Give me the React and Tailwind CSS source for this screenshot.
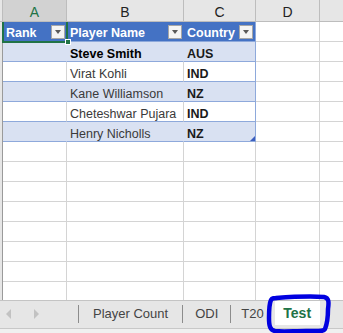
import React from "react";

const colWidths = ["w-[64px]", "w-[117px]", "w-[72px]", "w-[64px]"];
const colNames = ["A", "B", "C", "D"];

const players = [
  { name: "Steve Smith", country: "AUS", strong: true },
  { name: "Virat Kohli", country: "IND" },
  { name: "Kane Williamson", country: "NZ" },
  { name: "Cheteshwar Pujara", country: "IND" },
  { name: "Henry Nicholls", country: "NZ" },
];

function FilterButton() {
  return (
    <div className="w-[14px] h-[14px] shrink-0 bg-[#f4f4f4] border border-[#a6a6a6] flex items-center justify-center">
      <div className="w-0 h-0 border-l-[3.5px] border-r-[3.5px] border-t-[4px] border-l-transparent border-r-transparent border-t-[#595959]" />
    </div>
  );
}

function ColumnHeader() {
  return (
    <div className="flex h-[22px] shrink-0 bg-[#e6e6e6] border-b border-[#bdbdbd]">
      <div className="w-[3px] border-r border-[#bdbdbd]" />
      {colNames.map((c, i) => (
        <div
          key={c}
          className={
            colWidths[i] +
            " flex items-center justify-center pt-[3px] border-r border-[#bdbdbd] text-[14px] " +
            (i === 0 ? "bg-[#d2d2d2] text-[#217346]" : "text-[#222]")
          }
        >
          {c}
        </div>
      ))}
      <div className="flex-1" />
    </div>
  );
}

function TableHeaderRow() {
  return (
    <div className="flex h-[20px] shrink-0">
      <div className="w-[3px] bg-[#e6e6e6] border-r border-[#9a9a9a]" />
      <div className="w-[64px] relative bg-[#4472c4] border-b border-[#8ea9db] flex items-center justify-between pl-[3px] pr-[2px] text-white font-bold">
        <span className="mt-[3px]">Rank</span>
        <FilterButton />
        <div className="absolute -left-[1px] -top-[2px] w-[66px] h-[23px] border-2 border-[#217346]" />
        <div className="absolute -right-[4px] -bottom-[4px] w-[6px] h-[6px] bg-[#217346] border border-white" />
      </div>
      <div className="w-[117px] bg-[#4472c4] border-b border-[#8ea9db] flex items-center justify-between pl-[3px] pr-[2px] text-white font-bold">
        <span className="mt-[3px]">Player Name</span>
        <FilterButton />
      </div>
      <div className="w-[72px] bg-[#4472c4] border-b border-r border-[#8ea9db] flex items-center justify-between pl-[3px] pr-[2px] text-white font-bold">
        <span className="mt-[3px]">Country</span>
        <FilterButton />
      </div>
      <div className="w-[64px] border-r border-b border-[#d4d4d4]" />
      <div className="flex-1 border-b border-[#d4d4d4]" />
    </div>
  );
}

function DataRow({ player, band, last }) {
  const bg = band ? "bg-[#d9e1f2]" : "bg-white";
  const divider = band ? "border-r-[#d9e1f2]" : "border-r-[#d4d4d4]";
  return (
    <div className="flex h-[20px] shrink-0">
      <div className="w-[3px] bg-[#e6e6e6] border-r border-[#9a9a9a]" />
      <div className={"w-[64px] border-r border-b border-b-[#8ea9db] " + divider + " " + bg} />
      <div className={"w-[117px] border-r border-b border-b-[#8ea9db] " + divider + " " + bg + " flex items-center pl-[3px]"}>
        <span className={"mt-[5px] " + (player.strong ? "font-bold text-black" : "text-[#3a3a3a]")}>{player.name}</span>
      </div>
      <div className={"w-[72px] relative border-r border-b border-[#8ea9db] flex items-center pl-[3px] " + bg}>
        <span className="mt-[5px] font-bold text-[#1a1a1a]">{player.country}</span>
        {last && (
          <div className="absolute right-0 bottom-0 w-[5px] h-[5px] bg-[#3c5fbf] [clip-path:polygon(100%_0,100%_100%,0_100%)]" />
        )}
      </div>
      <div className="w-[64px] border-r border-b border-[#d4d4d4]" />
      <div className="flex-1 border-b border-[#d4d4d4]" />
    </div>
  );
}

function EmptyRow() {
  return (
    <div className="flex h-[20px] shrink-0">
      <div className="w-[3px] bg-[#e6e6e6] border-r border-[#9a9a9a]" />
      {colWidths.map((w) => (
        <div key={w} className={w + " border-r border-b border-[#d4d4d4]"} />
      ))}
      <div className="flex-1 border-b border-[#d4d4d4]" />
    </div>
  );
}

function SheetTabs() {
  return (
    <div className="relative h-[33px] shrink-0 bg-[#e6e6e6] border-t border-[#c4c4c4] flex items-start text-[13px] text-[#444]">
      <div className="flex items-center h-[25px] pl-[6px]">
        <div className="w-0 h-0 border-t-[5px] border-b-[5px] border-r-[5px] border-t-transparent border-b-transparent border-r-[#c2c2c2]" />
        <div className="ml-[23px] w-0 h-0 border-t-[5px] border-b-[5px] border-l-[5px] border-t-transparent border-b-transparent border-l-[#c2c2c2]" />
        <div className="ml-[39px] w-px h-[18px] bg-[#8c8c8c]" />
        <span className="ml-[14px]">Player Count</span>
        <div className="ml-[14px] w-px h-[18px] bg-[#8c8c8c]" />
        <span className="ml-[12px]">ODI</span>
        <div className="ml-[12px] w-px h-[18px] bg-[#8c8c8c]" />
        <span className="ml-[10px]">T20</span>
      </div>
      <div className="ml-[11px] w-[45px] h-[24px] bg-white flex items-center justify-center font-bold text-[#217346] text-[14px]">
        Test
      </div>
      <div className="absolute left-0 right-0 bottom-0 h-[5px] bg-[#f0f0f0] border-t border-[#c8c8c8]" />
      <svg className="absolute left-[266px] -top-[8px]" width="66" height="42" viewBox="0 0 66 42">
        <path
          d="M10 5 C24 4 44 3 58 4 C63 5 63 9 62 16 C62 24 61 31 59 36 C57 39 52 38 40 38 C28 38 16 39 9 38 C4 37 3 33 3 25 C3 17 3 11 5 7 C6 5 8 5 12 5"
          fill="none"
          stroke="#0000e0"
          strokeWidth="4.5"
          strokeLinecap="round"
          strokeLinejoin="round"
        />
      </svg>
    </div>
  );
}

export default function App() {
  const empty = Array.from({ length: 8 });
  return (
    <div className="w-[343px] h-[333px] overflow-hidden bg-white flex flex-col font-['Liberation_Sans',Arial,sans-serif] text-[12.5px]">
      <ColumnHeader />
      <div className="flex-1 overflow-hidden flex flex-col">
        <TableHeaderRow />
        {players.map((p, i) => (
          <DataRow key={p.name} player={p} band={i % 2 === 0} last={i === players.length - 1} />
        ))}
        {empty.map((_, i) => (
          <EmptyRow key={i} />
        ))}
      </div>
      <SheetTabs />
    </div>
  );
}
